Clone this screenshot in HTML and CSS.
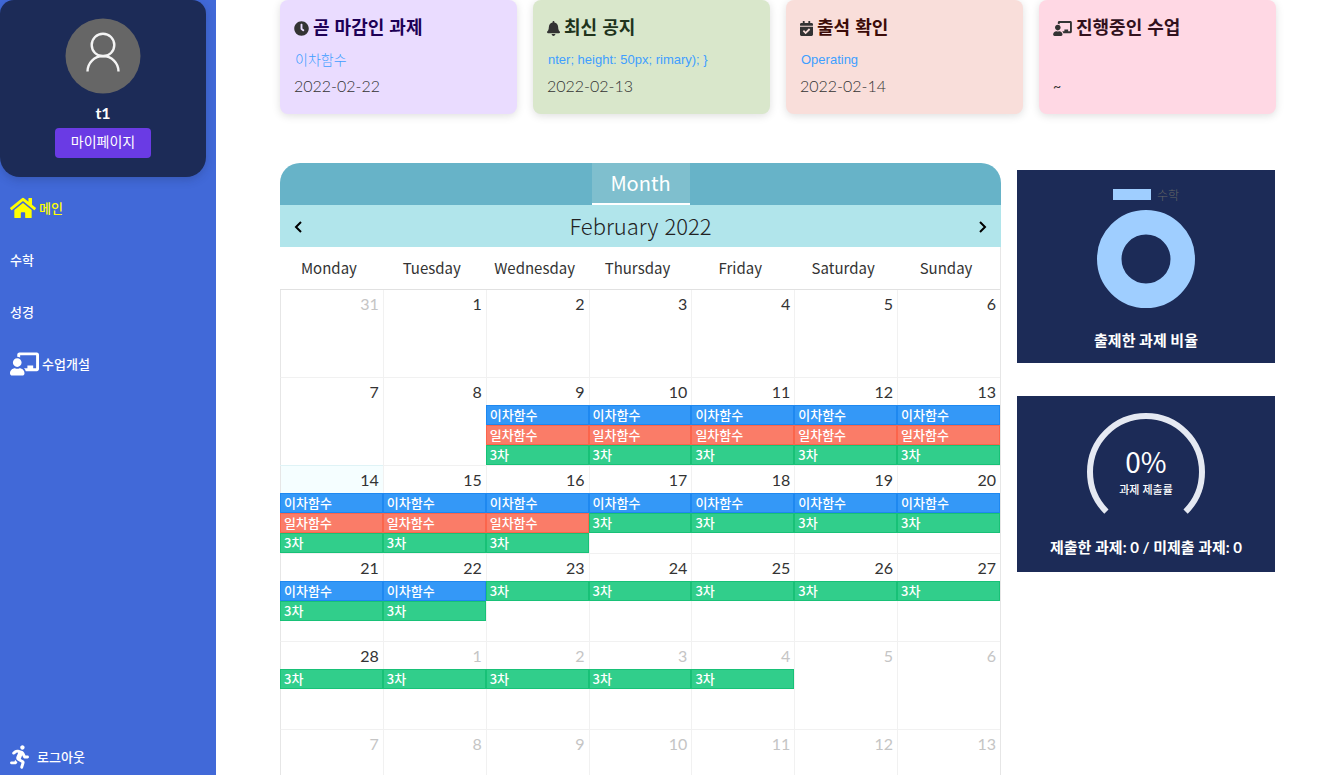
FILE: index.html
```html
<!DOCTYPE html>
<html lang="ko">
<head>
<meta charset="utf-8">
<meta name="viewport" content="width=device-width, initial-scale=1">
<title>메인</title>
<link rel="stylesheet" href="styles.css">
</head>
<body>
<svg class="sprite" aria-hidden="true">
  <symbol id="teacher" viewBox="0 0 640 512"><path d="M208 352c-2.390 0-4.780.35-7.060 1.090C187.980 357.300 174.350 360 160 360c-14.350 0-27.980-2.700-40.950-6.910-2.280-.74-4.660-1.090-7.050-1.090C49.940 352-.33 402.480 0 464.620.14 490.880 21.730 512 48 512h224c26.270 0 47.860-21.120 48-47.380.33-62.140-49.940-112.620-112-112.620zm-48-32c53.020 0 96-42.980 96-96s-42.980-96-96-96-96 42.980-96 96 42.980 96 96 96zM592 0H208c-26.470 0-48 22.250-48 49.590V96c23.420 0 45.100 6.780 64 17.800V64h352v288h-64v-64H384v64h-76.240c19.100 16.690 33.120 38.730 39.690 64H592c26.470 0 48-22.250 48-49.590V49.590C640 22.250 618.470 0 592 0z"/></symbol>
</svg>
<div class="app">
  <aside class="sidebar">
    <section class="profile">
      <svg class="avatar" viewBox="0 0 76 76" aria-hidden="true"><circle cx="38" cy="38" r="37.500" fill="#666"/><g fill="none" stroke="#f4f4f4" stroke-width="2.400"><circle cx="38" cy="27" r="11.300"/><path d="M22.500 53.500a15.500 15.500 0 0 1 31 0"/></g></svg>
      <strong class="user">t1</strong>
      <button class="mypage" type="button">마이페이지</button>
    </section>
    <nav class="menu">
      <a class="active" href="#main"><svg class="icon-home" viewBox="0 0 576 512" aria-hidden="true"><path d="M280.370 148.260L96 300.110V464a16 16 0 0 0 16 16l112.060-.29a16 16 0 0 0 15.920-16V368a16 16 0 0 1 16-16h64a16 16 0 0 1 16 16v95.640a16 16 0 0 0 16 16.050L464 480a16 16 0 0 0 16-16V300L295.670 148.260a12.190 12.190 0 0 0-15.300 0zM571.600 251.470L488 182.560V44.050a12 12 0 0 0-12-12h-56a12 12 0 0 0-12 12v72.610L318.470 43a48 48 0 0 0-61 0L4.340 251.470a12 12 0 0 0-1.600 16.900l25.500 31A12 12 0 0 0 45.150 301l235.220-193.740a12.190 12.190 0 0 1 15.300 0L530.900 301a12 12 0 0 0 16.900-1.600l25.500-31a12 12 0 0 0-1.700-16.930z"/></svg>메인</a>
      <a href="#math">수학</a>
      <a href="#bible">성경</a>
      <a href="#create"><svg class="icon-teacher" aria-hidden="true"><use href="#teacher"/></svg>수업개설</a>
      <a class="logout" href="#logout"><svg class="icon-run" viewBox="0 0 416 512" aria-hidden="true"><path d="M272 96c26.510 0 48-21.490 48-48S298.510 0 272 0s-48 21.490-48 48 21.490 48 48 48zM113.690 317.470l-14.800 34.520H32c-17.670 0-32 14.330-32 32s14.330 32 32 32h77.450c19.250 0 36.580-11.440 44.110-29.090l8.790-20.520-10.670-6.300c-17.320-10.230-30.060-25.370-37.990-42.610zM384 223.990h-44.030l-26.060-53.250c-12.500-25.550-35.450-44.230-61.780-50.940l-71.080-21.140c-28.300-6.800-57.770-.55-80.840 17.140l-39.670 30.410c-14.030 10.750-16.690 30.830-5.940 44.860s30.840 16.690 44.860 5.940l39.660-30.410c7.670-5.890 17.440-8 25.270-6.140l14.700 4.370-37.460 87.390c-12.620 29.480-1.310 64.010 26.300 80.310l84.980 50.170-27.470 87.730c-5.280 16.860 4.110 34.820 20.970 40.100 3.190 1 6.410 1.480 9.580 1.480 13.610 0 26.230-8.770 30.520-22.450l31.640-101.060c5.910-20.770-2.890-43.080-21.640-54.390l-61.240-36.140 31.310-78.280 20.270 41.430c8 16.340 24.920 26.890 43.110 26.890H384c17.670 0 32-14.330 32-32s-14.330-31.990-32-31.990z"/></svg>로그아웃</a>
    </nav>
  </aside>
  <main class="main">
    <section class="cards">
      <article class="card due">
        <h2><svg viewBox="0 0 512 512" width="15" height="15" aria-hidden="true"><path d="M256 8C119 8 8 119 8 256s111 248 248 248 248-111 248-248S393 8 256 8Zm92.490 313-20 25a16 16 0 0 1-22.490 2.500l-67-49.720a40 40 0 0 1-15-31.230V112a16 16 0 0 1 16-16h32a16 16 0 0 1 16 16v144l58 42.500a16 16 0 0 1 2.490 22.500Z"/></svg>곧 마감인 과제</h2>
        <a href="#due">이차함수</a>
        <time>2022-02-22</time>
      </article>
      <article class="card notice">
        <h2><svg viewBox="0 0 448 512" width="13" height="15" aria-hidden="true"><path d="M224 512c35.320 0 63.970-28.650 63.970-64H160.030c0 35.350 28.650 64 63.970 64zm215.390-149.710c-19.320-20.760-55.470-51.990-55.470-154.290 0-77.700-54.480-139.900-127.940-155.160V32c0-17.670-14.320-32-31.980-32s-31.980 14.330-31.980 32v20.840C118.560 68.100 64.080 130.300 64.080 208c0 102.300-36.150 133.530-55.470 154.290-6 6.450-8.660 14.160-8.610 21.710.11 16.400 12.980 32 32.100 32h383.800c19.120 0 32-15.600 32.100-32 .05-7.550-2.610-15.270-8.610-21.710z"/></svg>최신 공지</h2>
        <a href="#notice">nter; height: 50px; rimary); }</a>
        <time>2022-02-13</time>
      </article>
      <article class="card attend">
        <h2><svg viewBox="0 0 448 512" width="13" height="15" aria-hidden="true"><path d="M436 160H12c-6.627 0-12-5.373-12-12v-36c0-26.510 21.490-48 48-48h48V12c0-6.627 5.373-12 12-12h40c6.627 0 12 5.373 12 12v52h128V12c0-6.627 5.373-12 12-12h40c6.627 0 12 5.373 12 12v52h48c26.510 0 48 21.490 48 48v36c0 6.627-5.373 12-12 12zM12 192h424c6.627 0 12 5.373 12 12v260c0 26.510-21.490 48-48 48H48c-26.510 0-48-21.490-48-48V204c0-6.627 5.373-12 12-12zm333.296 95.947l-28.169-28.398c-4.667-4.705-12.265-4.736-16.970-.068L194.120 364.665l-45.980-46.352c-4.667-4.705-12.266-4.736-16.971-.068l-28.397 28.170c-4.705 4.667-4.736 12.265-.068 16.970l82.601 83.269c4.667 4.705 12.265 4.736 16.970.068l142.953-141.805c4.705-4.667 4.736-12.265.068-16.970z"/></svg>출석 확인</h2>
        <a href="#attend">Operating</a>
        <time>2022-02-14</time>
      </article>
      <article class="card live">
        <h2><svg width="19" height="15" aria-hidden="true"><use href="#teacher"/></svg>진행중인 수업</h2>
        <span class="range">~</span>
      </article>
    </section>
    <div class="board">
      <section class="calendar">
        <div class="views"><button type="button">Month</button></div>
        <header class="period">
          <button type="button" aria-label="이전 달"><svg viewBox="0 0 8 12" width="8" height="12"><path d="M7 1 2 6l5 5"/></svg></button>
          <h1>February 2022</h1>
          <button type="button" aria-label="다음 달"><svg viewBox="0 0 8 12" width="8" height="12"><path d="m1 1 5 5-5 5"/></svg></button>
        </header>
        <table class="month">
          <thead><tr><th>Monday</th><th>Tuesday</th><th>Wednesday</th><th>Thursday</th><th>Friday</th><th>Saturday</th><th>Sunday</th></tr></thead>
          <tbody>
            <tr>
              <td class="other"><time>31</time></td><td><time>1</time></td><td><time>2</time></td><td><time>3</time></td><td><time>4</time></td><td><time>5</time></td><td><time>6</time></td>
            </tr>
            <tr>
              <td><time>7</time></td>
              <td><time>8</time></td>
              <td><time>9</time><a class="event blue" href="#e1">이차함수</a><a class="event red" href="#e2">일차함수</a><a class="event green" href="#e3">3차</a></td>
              <td><time>10</time><a class="event blue" href="#e1">이차함수</a><a class="event red" href="#e2">일차함수</a><a class="event green" href="#e3">3차</a></td>
              <td><time>11</time><a class="event blue" href="#e1">이차함수</a><a class="event red" href="#e2">일차함수</a><a class="event green" href="#e3">3차</a></td>
              <td><time>12</time><a class="event blue" href="#e1">이차함수</a><a class="event red" href="#e2">일차함수</a><a class="event green" href="#e3">3차</a></td>
              <td><time>13</time><a class="event blue" href="#e1">이차함수</a><a class="event red" href="#e2">일차함수</a><a class="event green" href="#e3">3차</a></td>
            </tr>
            <tr>
              <td class="today"><time>14</time><a class="event blue" href="#e1">이차함수</a><a class="event red" href="#e2">일차함수</a><a class="event green" href="#e3">3차</a></td>
              <td><time>15</time><a class="event blue" href="#e1">이차함수</a><a class="event red" href="#e2">일차함수</a><a class="event green" href="#e3">3차</a></td>
              <td><time>16</time><a class="event blue" href="#e1">이차함수</a><a class="event red" href="#e2">일차함수</a><a class="event green" href="#e3">3차</a></td>
              <td><time>17</time><a class="event blue" href="#e1">이차함수</a><a class="event green" href="#e3">3차</a></td>
              <td><time>18</time><a class="event blue" href="#e1">이차함수</a><a class="event green" href="#e3">3차</a></td>
              <td><time>19</time><a class="event blue" href="#e1">이차함수</a><a class="event green" href="#e3">3차</a></td>
              <td><time>20</time><a class="event blue" href="#e1">이차함수</a><a class="event green" href="#e3">3차</a></td>
            </tr>
            <tr>
              <td><time>21</time><a class="event blue" href="#e1">이차함수</a><a class="event green" href="#e3">3차</a></td>
              <td><time>22</time><a class="event blue" href="#e1">이차함수</a><a class="event green" href="#e3">3차</a></td>
              <td><time>23</time><a class="event green" href="#e3">3차</a></td>
              <td><time>24</time><a class="event green" href="#e3">3차</a></td>
              <td><time>25</time><a class="event green" href="#e3">3차</a></td>
              <td><time>26</time><a class="event green" href="#e3">3차</a></td>
              <td><time>27</time><a class="event green" href="#e3">3차</a></td>
            </tr>
            <tr>
              <td><time>28</time><a class="event green" href="#e3">3차</a></td>
              <td class="other"><time>1</time><a class="event green" href="#e3">3차</a></td>
              <td class="other"><time>2</time><a class="event green" href="#e3">3차</a></td>
              <td class="other"><time>3</time><a class="event green" href="#e3">3차</a></td>
              <td class="other"><time>4</time><a class="event green" href="#e3">3차</a></td>
              <td class="other"><time>5</time></td>
              <td class="other"><time>6</time></td>
            </tr>
            <tr>
              <td class="other"><time>7</time></td><td class="other"><time>8</time></td><td class="other"><time>9</time></td><td class="other"><time>10</time></td><td class="other"><time>11</time></td><td class="other"><time>12</time></td><td class="other"><time>13</time></td>
            </tr>
          </tbody>
        </table>
      </section>
      <aside class="stats">
        <figure class="panel ratio">
          <div class="legend"><span class="swatch"></span>수학</div>
          <svg width="98" height="98" viewBox="0 0 98 98" aria-hidden="true"><circle cx="49" cy="49" r="36.750" fill="none" stroke="#9fceff" stroke-width="24.500"/></svg>
          <figcaption>출제한 과제 비율</figcaption>
        </figure>
        <figure class="panel rate">
          <div class="gauge">
            <svg width="118" height="101" viewBox="0 0 118 101" aria-hidden="true"><path d="M19.400 98.600A56 56 0 1 1 98.600 98.600" fill="none" stroke="#e5e9f2" stroke-width="6"/></svg>
            <div class="reading"><span class="value">0%</span><span class="name">과제 제출률</span></div>
          </div>
          <figcaption>제출한 과제: 0 / 미제출 과제: 0</figcaption>
        </figure>
      </aside>
    </div>
  </main>
</div>
</body>
</html>
```
FILE: styles.css
```css
* { box-sizing: border-box; }
body { margin: 0; overflow: hidden; background: #fff; color: #333; font-family: Lato, "Noto Sans CJK KR", sans-serif; }
a { text-decoration: none; }
button { border: 0; font-family: inherit; cursor: pointer; }
h1, h2, figure { margin: 0; }
.sprite { position: absolute; width: 0; height: 0; }
.app { display: flex; height: 100vh; overflow: hidden; }

.sidebar { flex: 0 0 216px; display: flex; flex-direction: column; background: #4169d8; }
.profile { display: flex; flex-direction: column; align-items: center; height: 177px; margin-right: 10px; padding-top: 18px; border-radius: 14px 14px 20px 20px; background: #1c2b57; box-shadow: 0 3px 8px rgba(28, 43, 87, .25); }
.avatar { width: 76px; height: 76px; }
.user { margin-top: 9px; color: #fff; font-size: 16px; line-height: 20px; }
.mypage { width: 96px; height: 30px; margin-top: 5px; padding: 0 0 4px; border-radius: 4px; background: #6a3be4; color: #fff; font-size: 14px; }
.menu { flex: 1; display: flex; flex-direction: column; padding-top: 5px; }
.menu a { display: flex; align-items: center; height: 52px; padding: 0 0 2px 10px; color: #fff; fill: #fff; font-size: 13px; font-weight: 500; }
.menu .active { color: #ff0; fill: #ff0; }
.menu svg { margin-top: 2px; }
.icon-home { width: 26px; height: 24px; margin-right: 3px; }
.icon-teacher { width: 29px; height: 24px; margin-right: 3px; }
.icon-run { width: 19px; height: 24px; margin-right: 8px; }
.menu .logout { height: 36px; margin-top: auto; }

.main { flex: 1; min-width: 0; padding: 0 52px 0 64px; }
.cards { display: grid; grid-template-columns: repeat(4, 1fr); gap: 16px; }
.card { display: flex; flex-direction: column; align-items: flex-start; height: 114px; padding: 13px 14px; border-radius: 8px; box-shadow: 0 2px 9px rgba(0, 0, 0, .13); }
.card h2 { display: flex; align-items: center; gap: 4px; font-family: "Noto Sans CJK KR", sans-serif; font-size: 18px; font-weight: 700; line-height: 26px; }
.card svg { margin-top: 4px; fill: #333; }
.card a { margin: 12px 0 0 1px; color: #409eff; font-family: "Liberation Sans", "Noto Sans CJK KR", sans-serif; font-size: 13px; line-height: 18px; }
.due a { font-size: 14px; font-weight: 300; }
.card time { margin-top: 7px; font-size: 16px; font-weight: 300; line-height: 20px; }
.range { margin-top: 38px; font-size: 14px; line-height: 18px; }
.due { background: #eadcff; } .due h2 { color: #1d0056; }
.notice { background: #d9e7cb; } .notice h2 { color: #20331b; }
.attend { background: #f9deda; } .attend h2 { color: #3c0b08; }
.live { background: #ffd8e4; } .live h2 { color: #31111d; }

.board { display: grid; grid-template-columns: 721fr 259fr; gap: 16px; align-items: start; margin-top: 49px; }
.calendar { overflow: hidden; border-radius: 20px 20px 0 0; }
.views { display: flex; justify-content: center; height: 42px; background: #67b3c8; }
.views button { width: 98px; border-bottom: 2px solid #fff; padding: 0 0 1px; background: #7fbfce; color: #fff; font-family: "Noto Sans CJK KR", sans-serif; font-size: 20px; }
.period { display: flex; align-items: center; justify-content: space-between; height: 42px; padding: 0 5px; background: #b1e5eb; }
.period h1 { color: #222; font-family: "Noto Sans CJK KR", sans-serif; font-size: 22px; font-weight: 300; line-height: 30px; padding-bottom: 2px; }
.period button { display: flex; align-items: center; justify-content: center; width: 26px; height: 32px; padding: 2px 0 0; background: transparent; }
.period path { fill: none; stroke: #000; stroke-width: 2; }
.month { width: 100%; table-layout: fixed; border-collapse: separate; border-spacing: 0; border-right: 1px solid #e6e6e6; }
.month th { height: 43px; padding: 0 5px 2px 0; border-bottom: 1px solid #e1e1e1; color: #333; font-family: "Noto Sans CJK KR", sans-serif; font-size: 15px; font-weight: 400; }
.month td { height: 88px; padding: 0; border-left: 1px solid #f1f1f1; border-bottom: 1px solid #f1f1f1; vertical-align: top; font-size: 16px; }
.month td:first-child { border-left-color: #e6e6e6; }
.month td > time { display: block; height: 27px; padding-right: 4px; font-weight: 400; line-height: 28px; text-align: right; }
.month .other time { color: #c5c5c5; }
.month .today { background: #f5feff; box-shadow: 0 -1px #dff3f6; }
.event { display: block; height: 20px; margin-left: -1px; padding-left: 3px; border: 1px solid; color: #fff; font-family: "Noto Sans CJK KR", sans-serif; font-size: 13px; font-weight: 500; line-height: 18px; white-space: nowrap; overflow: hidden; }
.blue { border-color: #1e88f0; background: #3498f7; }
.red { border-color: #fb654c; background: #fa7c68; }
.green { border-color: #18c177; background: #31ce8b; }

.stats { display: grid; gap: 33px; padding: 7px 1px 0 0; }
.panel { display: flex; flex-direction: column; align-items: center; background: #1c2b57; color: #fff; }
.ratio { height: 193px; padding-top: 17px; }
.legend { display: flex; align-items: center; gap: 6px; height: 14px; margin-bottom: 9px; color: #666; font-family: "Noto Sans CJK KR", sans-serif; font-size: 12px; font-weight: 300; }
.swatch { width: 38px; height: 11px; background: #9fceff; }
.panel figcaption { font-size: 15px; font-weight: 700; line-height: 22px; }
.ratio figcaption { margin-top: 21px; }
.rate { height: 176px; padding-top: 17px; }
.gauge { display: grid; }
.gauge > * { grid-area: 1 / 1; }
.reading { display: flex; flex-direction: column; align-items: center; padding-top: 30px; font-family: "Noto Sans CJK KR", sans-serif; }
.value { font-size: 28px; font-weight: 400; line-height: 36px; }
.name { font-size: 11px; font-weight: 500; line-height: 20px; }
.rate figcaption { margin-top: 22px; }
```
